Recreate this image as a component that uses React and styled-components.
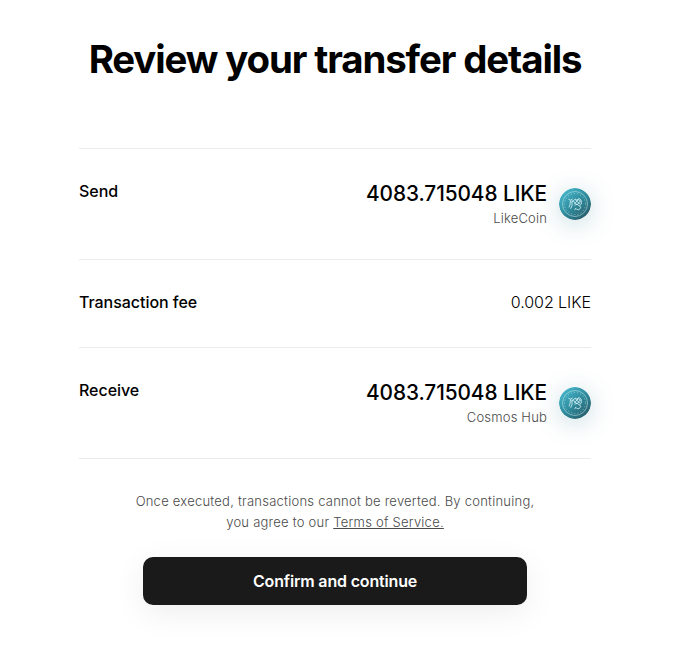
import React from "react";
import styled, { createGlobalStyle } from "styled-components";

const Global = createGlobalStyle`
  * { box-sizing: border-box; }
  body { margin: 0; background: #fff; color: #000; font-family: Inter, sans-serif; }
`;
const Page = styled.main`
  width: 512px;
  height: 645px;
  margin-left: 79px;
  padding-top: 35px;
  display: flex;
  flex-direction: column;
`;
const Title = styled.h1`
  margin: 0 0 65px;
  font-size: 38.4px;
  line-height: 48px;
  font-weight: 700;
  letter-spacing: -1.11px;
  text-align: center;
  white-space: nowrap;
`;
const Rows = styled.section`
  border-top: 1px solid #ebebeb;
`;
const Row = styled.div`
  display: flex;
  justify-content: space-between;
  height: ${(p) => (p.$tall ? 111 : 88)}px;
  padding-top: 30px;
  border-bottom: 1px solid #ebebeb;
`;
const Label = styled.div`
  font-size: 16px;
  line-height: 24px;
  font-weight: 500;
  letter-spacing: -0.04px;
`;
const Fee = styled.div`
  font-size: 16px;
  line-height: 24px;
  font-weight: 300;
  letter-spacing: -0.06px;
`;
const Asset = styled.div`
  display: flex;
  gap: 12px;
`;
const Amount = styled.div`
  padding-top: 1px;
  font-size: 20.8px;
  line-height: 28px;
  font-weight: 500;
  letter-spacing: -0.06px;
  text-align: right;
`;
const Chain = styled.div`
  font-size: 13px;
  line-height: 20px;
  font-weight: 300;
  letter-spacing: 0.18px;
  color: #4a4a4a;
  text-align: right;
`;
const Coin = styled.svg`
  width: 32px;
  height: 32px;
  margin-top: 9px;
  border-radius: 50%;
  box-shadow: 0 4px 24px rgba(40, 120, 140, 0.26);
`;
const Terms = styled.p`
  margin: 32px 0 0;
  font-size: 13px;
  line-height: 21px;
  font-weight: 300;
  letter-spacing: 0.24px;
  color: #4a4a4a;
  text-align: center;
`;
const Link = styled.a`
  text-decoration: underline;
`;
const Button = styled.button`
  width: 384px;
  height: 48px;
  margin: 24px auto 0;
  border: 0;
  border-radius: 10px;
  background: #1a1a1a;
  color: #fff;
  font: 600 16px/24px Inter, sans-serif;
  letter-spacing: -0.17px;
  box-shadow: 0 8px 32px rgba(0, 0, 0, 0.07);
`;

function CoinIcon({ id }) {
  return (
    <Coin viewBox="0 0 32 32" fill="none">
      <defs>
        <linearGradient id={id} x1="0.15" y1="0.1" x2="0.85" y2="0.9">
          <stop offset="0" stopColor="#46b4c8" />
          <stop offset="0.5" stopColor="#2f8c9e" />
          <stop offset="1" stopColor="#285f6c" />
        </linearGradient>
      </defs>
      <circle cx="16" cy="16" r="16" fill={`url(#${id})`} />
      <circle cx="16" cy="16" r="12.5" stroke="#bfe6ec" strokeOpacity=".7" strokeWidth=".8" />
      <circle cx="16" cy="16" r="10.5" stroke="#bfe6ec" strokeOpacity=".6" strokeWidth=".9" strokeDasharray="1.2 2" />
      <g stroke="#d5f0f4" strokeWidth="1" strokeOpacity=".85" strokeLinecap="round" strokeLinejoin="round">
        <path d="M9.8 11.4l1.7.8 1.8-1.2M11.4 12.8l-.4 4-.9 2.2M13 12.8v4.8l-1.2 2.8" />
        <path d="M12.8 14l3.4-2.8 1.7.9 2-1.6 2.2 1.6.2 4-1.9 1.8-2.2-1.5-2.4.7M14.4 13.3l3.4 3.2M16.4 11.8l4.6 4.4M19.2 11.4l1.8 1.8M18.8 12.2l-3.4 3.6M21.4 13l-3.2 3.6" />
        <path d="M20.8 18.2l.9 1.5-1.9 2.2-2.1-.7M16.8 20.2l-1 1.6" />
      </g>
    </Coin>
  );
}
function Transfer({ id, label, chain }) {
  return (
    <Row $tall>
      <Label>{label}</Label>
      <Asset>
        <div>
          <Amount>4083.715048 LIKE</Amount>
          <Chain>{chain}</Chain>
        </div>
        <CoinIcon id={id} />
      </Asset>
    </Row>
  );
}
export default function App() {
  return (
    <Page>
      <Global />
      <Title>Review your transfer details</Title>
      <Rows>
        <Transfer id="coin-send" label="Send" chain="LikeCoin" />
        <Row>
          <Label>Transaction fee</Label>
          <Fee>0.002 LIKE</Fee>
        </Row>
        <Transfer id="coin-receive" label="Receive" chain="Cosmos Hub" />
      </Rows>
      <Terms>
        Once executed, transactions cannot be reverted. By continuing,
        <br />
        you agree to our <Link>Terms of Service.</Link>
      </Terms>
      <Button>Confirm and continue</Button>
    </Page>
  );
}
